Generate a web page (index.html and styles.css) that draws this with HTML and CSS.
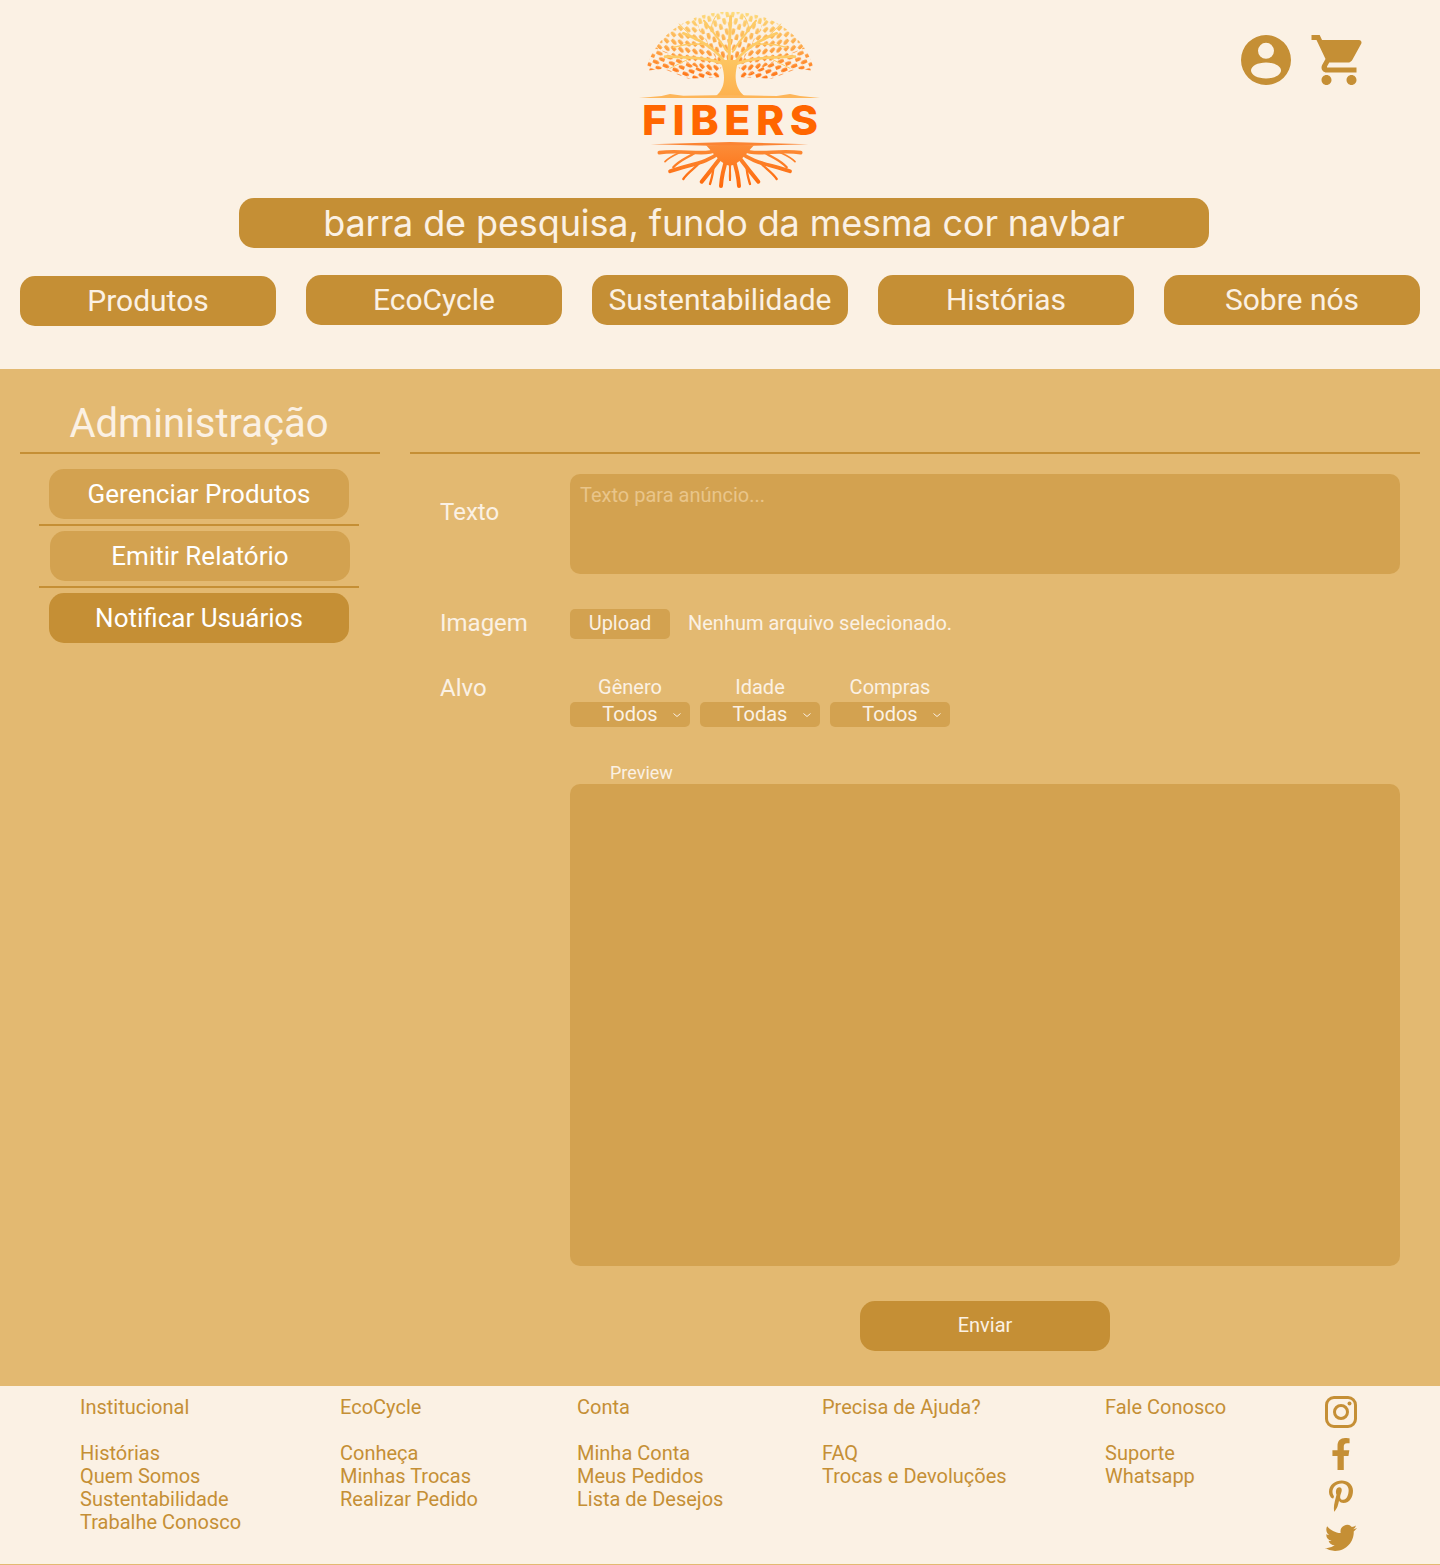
FILE: index.html
```html
<!DOCTYPE html>
<html lang="pt-BR">
<head>
  <meta charset="UTF-8">
  <meta name="viewport" content="width=device-width, initial-scale=1.0">
  <title>Fibers - Administração</title>
  <link rel="stylesheet" href="styles.css">
</head>
<body>
  <header class="site-header">
    <div class="top-row">
      <svg class="logo" viewBox="0 0 660 585" role="img" aria-label="Fibers">
        <defs>
          <linearGradient id="leafGrad" gradientUnits="userSpaceOnUse" x1="0" y1="35" x2="0" y2="235">
            <stop offset="0" stop-color="#fddc7c"/>
            <stop offset="0.4" stop-color="#fdb554"/>
            <stop offset="0.8" stop-color="#ff8a2c"/>
            <stop offset="1" stop-color="#ff7416"/>
          </linearGradient>
          <linearGradient id="trunkGrad" gradientUnits="userSpaceOnUse" x1="0" y1="100" x2="0" y2="295">
            <stop offset="0" stop-color="#fdd46e"/>
            <stop offset="1" stop-color="#fdb04e"/>
          </linearGradient>
          <linearGradient id="rootGrad" gradientUnits="userSpaceOnUse" x1="0" y1="430" x2="0" y2="560">
            <stop offset="0" stop-color="#fb8e3a"/>
            <stop offset="1" stop-color="#ff6a0c"/>
          </linearGradient>
          <pattern id="tileTop" width="28" height="32" patternUnits="userSpaceOnUse" patternTransform="rotate(-14)">
            <ellipse cx="8" cy="9" rx="5.500" ry="11" fill="#fff"/>
            <ellipse cx="22" cy="25" rx="5.500" ry="11" fill="#fff"/>
          </pattern>
          <pattern id="tileMid" width="28" height="32" patternUnits="userSpaceOnUse" patternTransform="rotate(-42)">
            <ellipse cx="8" cy="9" rx="5.500" ry="11" fill="#fff"/>
            <ellipse cx="22" cy="25" rx="5.500" ry="11" fill="#fff"/>
          </pattern>
          <pattern id="tileLow" width="28" height="32" patternUnits="userSpaceOnUse" patternTransform="rotate(-68)">
            <ellipse cx="8" cy="9" rx="5.500" ry="11" fill="#fff"/>
            <ellipse cx="22" cy="25" rx="5.500" ry="11" fill="#fff"/>
          </pattern>
          <mask id="maskTop"><rect width="660" height="300" fill="url(#tileTop)"/></mask>
          <mask id="maskMid"><rect width="660" height="300" fill="url(#tileMid)"/></mask>
          <mask id="maskLow"><rect width="660" height="300" fill="url(#tileLow)"/></mask>
          <clipPath id="domeHalf">
            <path d="M330 35A252 215 0 0 0 78 212L130 206L205 236L298 232L306 190H330Z"/>
          </clipPath>
          <g id="canopySide">
            <g clip-path="url(#domeHalf)" fill="url(#leafGrad)">
              <path d="M330 250L330 0L190 0Z" mask="url(#maskTop)"/>
              <path d="M330 250L190 0L0 0L0 90Z" mask="url(#maskMid)"/>
              <path d="M330 250L0 90L0 300L330 300Z" mask="url(#maskLow)"/>
            </g>
            <g fill="none" stroke="#fdcb66" stroke-linecap="round">
              <path d="M318 192C292 150 250 125 190 100" stroke-width="8"/>
              <path d="M312 192C270 174 215 172 135 170" stroke-width="8"/>
              <path d="M322 155C298 118 275 92 252 62" stroke-width="6"/>
              <path d="M262 134C230 130 195 132 160 142" stroke-width="4"/>
              <path d="M225 118C205 100 190 85 178 72" stroke-width="3"/>
              <path d="M215 172C190 185 170 195 150 205" stroke-width="3"/>
              <path d="M275 92C272 75 280 60 288 48" stroke-width="3"/>
            </g>
          </g>
          <g id="rootSide" fill="none" stroke="url(#rootGrad)" stroke-linecap="round">
            <path d="M300 445C260 472 190 447 118 458" stroke-width="11"/>
            <path d="M225 458C200 475 180 480 160 502" stroke-width="7"/>
            <path d="M185 455C165 465 150 470 135 485" stroke-width="5"/>
            <path d="M305 452C260 492 210 492 150 514" stroke-width="11"/>
            <path d="M240 487C225 505 205 515 190 537" stroke-width="7"/>
            <path d="M312 460C285 495 270 515 245 545" stroke-width="12"/>
            <path d="M280 500C280 520 275 535 270 552" stroke-width="7"/>
            <path d="M322 470C312 500 305 525 303 558" stroke-width="12"/>
            <path d="M330 480C328 505 332 520 330 540" stroke-width="6"/>
          </g>
        </defs>
        <use href="#canopySide"/>
        <use href="#canopySide" transform="translate(660 0) scale(-1 1)"/>
        <path d="M328 195C326 150 330 105 332 50" fill="none" stroke="#fdcb66" stroke-width="9" stroke-linecap="round"/>
        <path d="M286 290C312 268 322 235 300 180H356C338 235 348 268 376 290Z" fill="url(#trunkGrad)"/>
        <path d="M57 294L125 288L150 282L190 287L330 285L470 288L510 282L540 288L600 294Z" fill="#fdb65a"/>
        <text class="logo-text" x="66" y="405" textLength="545" lengthAdjust="spacingAndGlyphs">FIBERS</text>
        <path d="M92 433L330 426L565 433L330 439Z" fill="#fb8433"/>
        <path d="M258 436H402C375 465 355 495 330 497C305 495 285 465 258 436Z" fill="url(#rootGrad)"/>
        <use href="#rootSide"/>
        <use href="#rootSide" transform="translate(660 0) scale(-1 1)"/>
      </svg>
      <div class="user-icons">
        <svg class="icon-user" viewBox="0 0 50 50">
          <path fill-rule="evenodd" d="M25 0a25 25 0 1 0 0 50a25 25 0 1 0 0-50ZM25 7.800a8 8 0 1 1 0 16a8 8 0 1 1 0-16ZM25 27.500c8.300 0 15 3.600 15 8s-6.700 8-15 8s-15-3.600-15-8s6.700-8 15-8Z"/>
        </svg>
        <svg class="icon-cart" viewBox="0 0 24 24">
          <path d="M7 18c-1.100 0-1.990.9-1.990 2S5.900 22 7 22s2-.9 2-2-.9-2-2-2zM1 2v2h2l3.600 7.590-1.350 2.450c-.16.28-.25.61-.25.96 0 1.100.9 2 2 2h12v-2H7.420c-.14 0-.25-.11-.25-.25l.03-.12.9-1.630h7.450c.75 0 1.410-.41 1.750-1.030l3.580-6.490c.08-.14.12-.31.12-.48 0-.55-.45-1-1-1H5.210l-.94-2H1zm16 16c-1.100 0-1.990.9-1.990 2s.89 2 1.990 2 2-.9 2-2-.9-2-2-2z"/>
        </svg>
      </div>
    </div>
    <div class="search-bar">barra de pesquisa, fundo da mesma cor navbar</div>
    <nav class="navbar">
      <a class="nav-item nav-low" href="#">Produtos</a>
      <a class="nav-item" href="#">EcoCycle</a>
      <a class="nav-item" href="#">Sustentabilidade</a>
      <a class="nav-item" href="#">Histórias</a>
      <a class="nav-item" href="#">Sobre nós</a>
    </nav>
  </header>

  <main class="admin">
    <aside class="sidebar">
      <h1 class="sidebar-title">Administração</h1>
      <div class="side-menu">
        <a class="side-btn" href="#">Gerenciar Produtos</a>
        <hr class="side-line">
        <a class="side-btn side-shift" href="#">Emitir Relatório</a>
        <hr class="side-line">
        <a class="side-btn side-active" href="#">Notificar Usuários</a>
      </div>
    </aside>

    <section class="content">
      <form class="notify-form">
        <div class="row row-text">
          <label class="row-label" for="texto">Texto</label>
          <textarea class="text-box" id="texto" placeholder="Texto para anúncio..."></textarea>
        </div>
        <div class="row row-image">
          <span class="row-label">Imagem</span>
          <button class="upload-btn" type="button">Upload</button>
          <span class="file-name">Nenhum arquivo selecionado.</span>
        </div>
        <div class="row row-target">
          <span class="row-label">Alvo</span>
          <div class="selects">
            <div class="select-group">
              <span class="select-label">Gênero</span>
              <div class="select-box"><span class="select-value">Todos</span><svg class="chevron" viewBox="0 0 10 6"><path d="M1.500 1.500L5 4.500L8.500 1.500"/></svg></div>
            </div>
            <div class="select-group">
              <span class="select-label">Idade</span>
              <div class="select-box"><span class="select-value">Todas</span><svg class="chevron" viewBox="0 0 10 6"><path d="M1.500 1.500L5 4.500L8.500 1.500"/></svg></div>
            </div>
            <div class="select-group">
              <span class="select-label">Compras</span>
              <div class="select-box"><span class="select-value">Todos</span><svg class="chevron" viewBox="0 0 10 6"><path d="M1.500 1.500L5 4.500L8.500 1.500"/></svg></div>
            </div>
          </div>
        </div>
        <div class="preview-wrap">
          <span class="preview-label">Preview</span>
          <div class="preview-box"></div>
        </div>
        <button class="send-btn" type="button">Enviar</button>
      </form>
    </section>
  </main>

  <footer class="site-footer">
    <div class="foot-col col-inst">
      <h4>Institucional</h4>
      <a href="#">Histórias</a>
      <a href="#">Quem Somos</a>
      <a href="#">Sustentabilidade</a>
      <a href="#">Trabalhe Conosco</a>
    </div>
    <div class="foot-col col-eco">
      <h4>EcoCycle</h4>
      <a href="#">Conheça</a>
      <a href="#">Minhas Trocas</a>
      <a href="#">Realizar Pedido</a>
    </div>
    <div class="foot-col col-conta">
      <h4>Conta</h4>
      <a href="#">Minha Conta</a>
      <a href="#">Meus Pedidos</a>
      <a href="#">Lista de Desejos</a>
    </div>
    <div class="foot-col col-ajuda">
      <h4>Precisa de Ajuda?</h4>
      <a href="#">FAQ</a>
      <a href="#">Trocas e Devoluções</a>
    </div>
    <div class="foot-col col-fale">
      <h4>Fale Conosco</h4>
      <a href="#">Suporte</a>
      <a href="#">Whatsapp</a>
    </div>
    <div class="social">
      <svg class="social-icon" viewBox="0 0 32 32">
        <rect x="1.500" y="1.500" width="29" height="29" rx="7.500" class="ig-line"/>
        <circle cx="16" cy="16" r="6.500" class="ig-line"/>
        <circle cx="24.500" cy="7.500" r="2"/>
      </svg>
      <svg class="social-icon" viewBox="0 0 320 512" >
        <path d="M279.140 288l14.220-92.660h-88.910v-60.130c0-25.350 12.420-50.060 52.240-50.060h40.420V6.260S260.430 0 225.360 0c-73.220 0-121.080 44.380-121.080 124.720v70.620H22.890V288h81.390v224h100.170V288z"/>
      </svg>
      <svg class="social-icon" viewBox="0 0 384 512">
        <path d="M204 6.500C101.400 6.500 0 74.900 0 185.600 0 256 39.600 296 63.600 296c9.900 0 15.600-27.600 15.600-35.400 0-9.300-23.700-29.100-23.700-67.800 0-80.400 61.200-137.400 140.400-137.400 68.100 0 118.500 38.700 118.500 109.800 0 53.100-21.300 152.700-90.300 152.700-24.900 0-46.200-18-46.200-43.800 0-37.800 26.400-74.400 26.400-113.400 0-66.200-93.900-54.200-93.900 25.800 0 16.800 2.100 35.400 9.600 50.700-13.800 59.400-42 147.900-42 209.100 0 18.900 2.700 37.500 4.500 56.400 3.400 3.800 1.700 3.400 6.900 1.500 50.400-69 48.600-82.500 71.400-172.800 12.300 23.400 44.100 36 69.300 36 106.200 0 153.900-103.500 153.900-196.800C384 71.300 298.200 6.500 204 6.500z"/>
      </svg>
      <svg class="social-icon" viewBox="0 0 24 24">
        <path d="M23.953 4.570a10 10 0 01-2.825.775 4.958 4.958 0 002.163-2.723c-.951.555-2.005.959-3.127 1.184a4.920 4.920 0 00-8.384 4.482C7.690 8.095 4.067 6.130 1.640 3.162a4.822 4.822 0 00-.666 2.475c0 1.710.87 3.213 2.188 4.096a4.904 4.904 0 01-2.228-.616v.06a4.923 4.923 0 003.946 4.827 4.996 4.996 0 01-2.212.085 4.936 4.936 0 004.604 3.417 9.867 9.867 0 01-6.102 2.105c-.39 0-.779-.023-1.170-.067a13.995 13.995 0 007.557 2.209c9.053 0 13.998-7.496 13.998-13.985 0-.21 0-.42-.015-.63A9.935 9.935 0 0024 4.590z"/>
      </svg>
    </div>
  </footer>
</body>
</html>
```

FILE: styles.css
```css
* {
  box-sizing: border-box;
}

body {
  margin: 0;
  font-family: Roboto, Arial, sans-serif;
  background-color: #fbf1e4;
  color: #fbf1e4;
}

a {
  color: inherit;
  text-decoration: none;
}

/* header */
.site-header {
  height: 369px;
}

.top-row {
  display: flex;
  justify-content: space-between;
  height: 195px;
  padding-left: 620px;
  padding-right: 71px;
}

.logo {
  width: 220px;
  height: 195px;
}

.logo-text {
  font-family: Inter, sans-serif;
  font-weight: 800;
  font-size: 124px;
  letter-spacing: 16px;
  fill: #ff6600;
}

.user-icons {
  display: flex;
  gap: 18px;
  padding-top: 30px;
  height: 90px;
}

.icon-user {
  width: 50px;
  height: 50px;
  margin-top: 5px;
  fill: #c58f35;
}

.icon-cart {
  width: 60px;
  height: 60px;
  fill: #c58f35;
}

.search-bar {
  width: 970px;
  height: 50px;
  margin: 3px 0 0 239px;
  background-color: #c58f35;
  border-radius: 15px;
  font-family: Inter, sans-serif;
  font-size: 36px;
  line-height: 50px;
  letter-spacing: -0.11px;
  text-align: center;
}

.navbar {
  display: flex;
  gap: 30px;
  margin-top: 27px;
  padding: 0 20px;
}

.nav-item {
  width: 256px;
  height: 50px;
  background-color: #c58f35;
  border-radius: 15px;
  font-size: 30px;
  line-height: 50px;
  text-align: center;
}

.nav-low {
  margin-top: 1px;
}

/* main area */
.admin {
  display: flex;
  height: 1017px;
  background-color: #e3b971;
}

.sidebar {
  width: 360px;
  margin-left: 20px;
}

.sidebar-title {
  height: 85px;
  margin: 0;
  padding: 31px 2px 0 0;
  border-bottom: 2px solid #c58f35;
  font-size: 40px;
  font-weight: 400;
  line-height: 48px;
  text-align: center;
}

.side-menu {
  display: flex;
  flex-direction: column;
  align-items: center;
  padding-top: 15px;
  width: 320px;
  margin-left: 19px;
}

.side-btn {
  width: 300px;
  height: 50px;
  background-color: #d3a250;
  border-radius: 15px;
  color: #fff;
  font-size: 26px;
  line-height: 50px;
  text-align: center;
}

.side-shift {
  margin-left: 2px;
}

.side-active {
  background-color: #c58f35;
}

.side-line {
  width: 100%;
  height: 2px;
  margin: 5px 0;
  border: none;
  background-color: #c58f35;
}

.content {
  width: 1010px;
  margin-left: 30px;
  padding-top: 83px;
}

.notify-form {
  border-top: 2px solid #c58f35;
  padding: 20px 20px 0 30px;
}

.row {
  display: flex;
}

.row-label {
  width: 130px;
  flex-shrink: 0;
  font-size: 24px;
  line-height: 30px;
}

.row-text .row-label {
  padding-top: 23px;
}

.text-box {
  display: block;
  width: 830px;
  height: 100px;
  padding: 9px 10px;
  border: none;
  border-radius: 10px;
  background-color: #d3a250;
  color: #fbf1e4;
  font-family: Roboto, Arial, sans-serif;
  font-size: 20px;
  resize: none;
}

.text-box::placeholder {
  color: #e9c58a;
  opacity: 1;
}

.row-image {
  align-items: center;
  margin-top: 35px;
}

.row-image .row-label {
  line-height: 26px;
  padding-bottom: 2px;
}

.upload-btn {
  width: 100px;
  height: 30px;
  padding: 0 0 3px;
  border: none;
  border-radius: 5px;
  background-color: #d3a250;
  color: #fbf1e4;
  font-family: Roboto, Arial, sans-serif;
  font-size: 20px;
}

.file-name {
  margin-left: 18px;
  padding-bottom: 2px;
  font-size: 20px;
}

.row-target {
  margin-top: 34px;
}

.selects {
  display: flex;
  gap: 10px;
}

.select-group {
  width: 120px;
  text-align: center;
}

.select-label {
  display: block;
  height: 29px;
  font-size: 20px;
  line-height: 28px;
}

.select-box {
  display: grid;
  grid-template-columns: 1fr auto 1fr;
  align-items: center;
  height: 25px;
  padding-bottom: 2px;
  border-radius: 5px;
  background-color: #d3a250;
  font-size: 20px;
}

.select-value {
  grid-column: 2;
}

.chevron {
  justify-self: end;
  width: 10px;
  height: 6px;
  margin-top: 2px;
  margin-right: 8px;
  fill: none;
  stroke: #fbf1e4;
  stroke-width: 1;
}

.preview-wrap {
  margin-top: 36px;
  margin-left: 130px;
}

.preview-label {
  display: block;
  height: 21px;
  padding-left: 40px;
  font-size: 18px;
  line-height: 19px;
}

.preview-box {
  width: 830px;
  height: 482px;
  border-radius: 10px;
  background-color: #d3a250;
}

.send-btn {
  display: block;
  width: 250px;
  height: 50px;
  margin: 35px 0 0 420px;
  padding: 0 0 2px;
  border: none;
  border-radius: 15px;
  background-color: #c58f35;
  color: #fbf1e4;
  font-family: Roboto, Arial, sans-serif;
  font-size: 20px;
}

/* footer */
.site-footer {
  display: flex;
  height: 179px;
  padding-top: 10px;
  padding-left: 80px;
  border-bottom: 1px solid #e3b971;
  color: #c58f35;
  font-size: 20px;
  line-height: 23px;
}

.foot-col h4 {
  margin: 0 0 23px;
  font-size: 20px;
  font-weight: 400;
}

.foot-col a {
  display: block;
}

.col-inst { width: 260px; }
.col-eco { width: 237px; }
.col-conta { width: 245px; }
.col-ajuda { width: 283px; }
.col-fale { width: 220px; }

.social {
  display: flex;
  flex-direction: column;
  align-items: center;
  gap: 10px;
  width: 32px;
}

.social-icon {
  width: 32px;
  height: 32px;
  fill: #c58f35;
}

.ig-line {
  fill: none;
  stroke: #c58f35;
  stroke-width: 3;
}
```
